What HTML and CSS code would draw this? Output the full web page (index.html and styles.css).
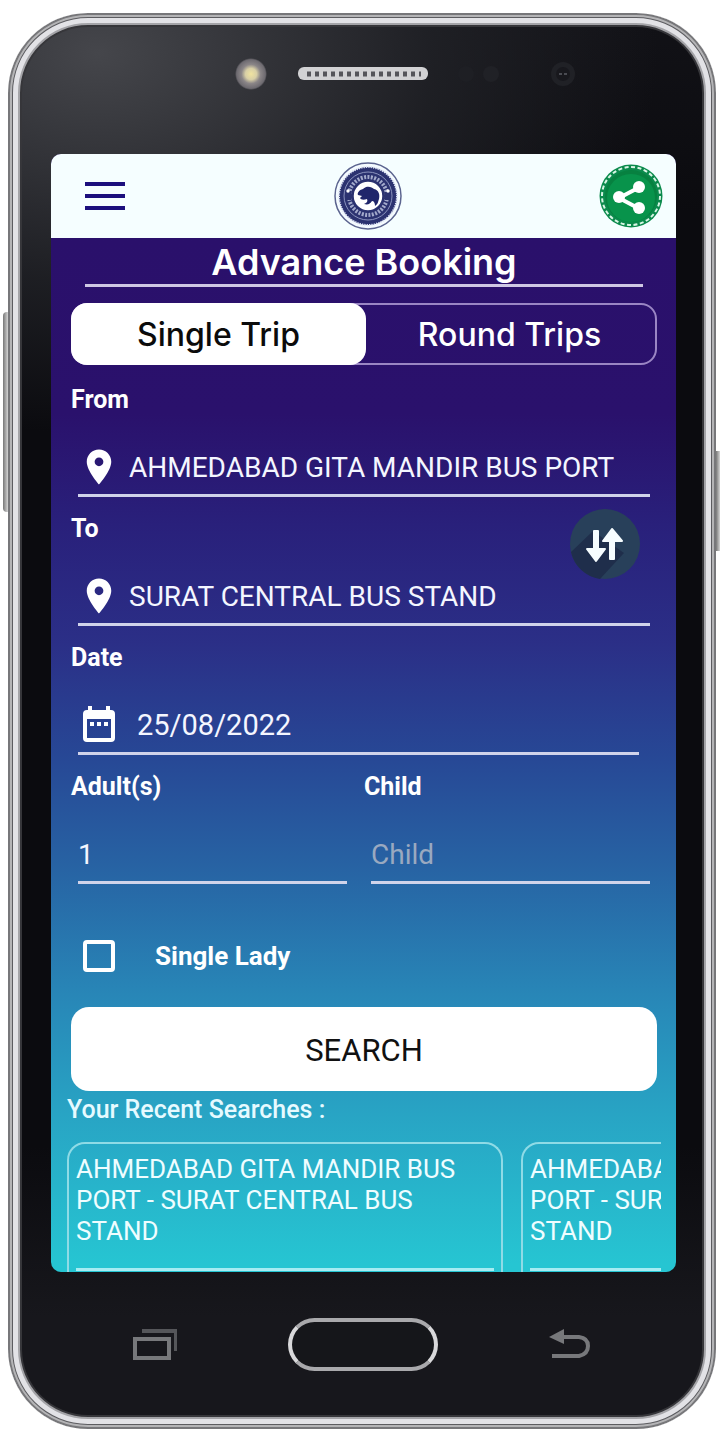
FILE: index.html
```html
<!DOCTYPE html>
<html lang="en">
<head>
    <meta charset="UTF-8">
    <meta name="viewport" content="width=device-width, initial-scale=1.0">
    <title>Advance Booking</title>
    <link rel="stylesheet" href="styles.css">
</head>
<body>
<div class="phone">
    <span class="side-key side-key-left"></span>
    <span class="side-key side-key-right"></span>

    <!-- Flash, speaker and sensors -->
    <div class="bezel-top">
        <svg width="360" height="40" viewBox="0 0 360 40">
            <defs>
                <radialGradient id="flash">
                    <stop offset="0" stop-color="#f0e3a0"/>
                    <stop offset="0.35" stop-color="#d8cfa6"/>
                    <stop offset="0.6" stop-color="#8b8688"/>
                    <stop offset="0.9" stop-color="#6d6a70"/>
                    <stop offset="1" stop-color="#6d6a70" stop-opacity="0"/>
                </radialGradient>
            </defs>
            <circle cx="20" cy="20" r="16" fill="url(#flash)"/>
            <rect x="67" y="13" width="130" height="13" rx="6" fill="#d2d2d4"/>
            <path d="M76 20H190" stroke="#55555a" stroke-width="5" stroke-dasharray="4 4"/>
            <circle cx="235" cy="20" r="8" fill="#1e1f24"/>
            <circle cx="260" cy="20" r="8" fill="#202126"/>
            <circle cx="332" cy="20" r="12" fill="#202126"/>
            <circle cx="332" cy="20" r="7" fill="#18181d"/>
            <path d="M328 20H331M333 20H336" stroke="#4a4b52" stroke-width="2"/>
        </svg>
    </div>

    <div class="screen">
        <header class="topbar">
            <button class="menu-btn" aria-label="Menu">
                <svg width="40" height="28" viewBox="0 0 40 28">
                    <path d="M0 2H40M0 14H40M0 26H40" stroke="#1c0f7d" stroke-width="4"/>
                </svg>
            </button>
            <svg class="logo" width="68" height="68" viewBox="0 0 68 68">
                <circle cx="34" cy="34" r="33" fill="#f4fbff" stroke="#5b648f" stroke-width="1.5"/>
                <circle cx="34" cy="34" r="29" fill="#2b3270"/>
                <circle cx="34" cy="34" r="29" fill="none" stroke="#dfe5f5" stroke-width="2" stroke-dasharray="1.2 1.2"/>
                <circle cx="34" cy="34" r="24" fill="none" stroke="#8a92bd" stroke-width="1"/>
                <circle cx="34" cy="34" r="19" fill="none" stroke="#a3aacb" stroke-width="4" stroke-dasharray="2 1.4"/>
                <path d="M14 30v8M54 30v8" stroke="#2b3270" stroke-width="6"/>
                <circle cx="14" cy="29" r="1.700" fill="#fff"/>
                <circle cx="54" cy="29" r="1.700" fill="#fff"/>
                <circle cx="34" cy="34" r="15" fill="#fff" stroke="#2b3270" stroke-width="1.5"/>
                <path d="M24 33C23 31 25 28 29 27C33 23 38 25 40 27C45 28 46 33 45 37C44 40 44 42 41 44C41 41 40 39 38 39C36 42 34 43 30 42C33 41 34 39 33 37C30 38 27 38 26 36L28 34z" fill="#20266b"/>
            </svg>
            <button class="share-btn" aria-label="Share">
                <svg width="64" height="64" viewBox="0 0 64 64">
                    <circle cx="32" cy="32" r="31.500" fill="#0b8a4c"/>
                    <circle cx="32" cy="32" r="29" fill="none" stroke="#d8f5e4" stroke-width="2" stroke-dasharray="4 2.500"/>
                    <circle cx="32" cy="32" r="26" fill="#078140"/>
                    <circle cx="32" cy="34" r="24" fill="#08934b"/>
                    <path d="M39 24L20 34L39 44" fill="none" stroke="#fff" stroke-width="4"/>
                    <circle cx="40" cy="23" r="6" fill="#fff"/>
                    <circle cx="20" cy="33" r="6" fill="#fff"/>
                    <circle cx="40" cy="44" r="6" fill="#fff"/>
                </svg>
            </button>
        </header>

        <main class="booking">
            <h1 class="title">Advance Booking</h1>

            <div class="tabs">
                <button class="tab active">Single Trip</button>
                <button class="tab">Round Trips</button>
            </div>

            <form class="search-form">
                <div class="field">
                    <label for="from">From</label>
                    <div class="input-row">
                        <svg class="field-icon" width="42" height="42" viewBox="0 0 24 24">
                            <path fill="#fff" d="M12 2C8.130 2 5 5.130 5 9c0 5.250 7 13 7 13s7-7.750 7-13c0-3.870-3.130-7-7-7zm0 9.500a2.500 2.500 0 0 1 0-5 2.500 2.500 0 0 1 0 5z"/>
                        </svg>
                        <input type="text" id="from" value="AHMEDABAD GITA MANDIR BUS PORT">
                    </div>
                </div>

                <div class="field">
                    <label for="to">To</label>
                    <div class="input-row">
                        <svg class="field-icon" width="42" height="42" viewBox="0 0 24 24">
                            <path fill="#fff" d="M12 2C8.130 2 5 5.130 5 9c0 5.250 7 13 7 13s7-7.750 7-13c0-3.870-3.130-7-7-7zm0 9.500a2.500 2.500 0 0 1 0-5 2.500 2.500 0 0 1 0 5z"/>
                        </svg>
                        <input type="text" id="to" value="SURAT CENTRAL BUS STAND">
                    </div>
                    <button type="button" class="swap-btn" aria-label="Swap">
                        <svg width="70" height="70" viewBox="0 0 70 70">
                            <circle cx="35" cy="35" r="35" fill="#28405a"/>
                            <path d="M23 22L1 43A35 35 0 0 0 30 70L54 44z" fill="#1f2e4b"/>
                            <g fill="#f6fdff" stroke="#f6fdff" stroke-width="2" stroke-linejoin="round">
                                <path d="M24 22h4v18h7l-9 12-9-12h7z"/>
                                <path d="M40 50h4V32h8l-10-12-9 12h7z"/>
                            </g>
                        </svg>
                    </button>
                </div>

                <div class="field">
                    <label for="date">Date</label>
                    <div class="input-row date-row">
                        <svg class="field-icon" width="42" height="42" viewBox="0 0 42 42">
                            <path fill="#fff" fill-rule="evenodd" d="M10 2h4v4h14V2h4v4h1q4 0 4 4v24q0 4-4 4H9q-4 0-4-4V10q0-4 4-4h1zM9 15v19h24V15z"/>
                            <path stroke="#fff" stroke-width="4" d="M12 20h4M19 20h4M26 20h4"/>
                        </svg>
                        <input type="text" id="date" value="25/08/2022">
                    </div>
                </div>

                <div class="field-pair">
                    <div class="field">
                        <label for="adults">Adult(s)</label>
                        <div class="input-row adult-row">
                            <input type="text" id="adults" value="1">
                        </div>
                    </div>
                    <div class="field">
                        <label for="child">Child</label>
                        <div class="input-row">
                            <input type="text" id="child" placeholder="Child">
                        </div>
                    </div>
                </div>

                <div class="check-row">
                    <input type="checkbox" id="lady">
                    <label for="lady">Single Lady</label>
                </div>

                <button type="submit" class="search-btn">SEARCH</button>
            </form>
        </main>

        <section class="recent">
            <h2>Your Recent Searches :</h2>
            <div class="recent-list">
                <a href="#" class="recent-card">AHMEDABAD GITA MANDIR BUS PORT - SURAT CENTRAL BUS STAND</a>
                <a href="#" class="recent-card">AHMEDABAD GITA MANDIR BUS PORT - SURAT CENTRAL BUS STAND</a>
            </div>
        </section>
    </div>

    <!-- Hardware keys -->
    <nav class="bezel-bottom">
        <button aria-label="Recent apps">
            <svg width="44" height="32" viewBox="0 0 44 32">
                <path d="M9 2H43V22" fill="none" stroke="#55565a" stroke-width="4"/>
                <rect x="2" y="10" width="34" height="19" fill="none" stroke="#77787b" stroke-width="4"/>
            </svg>
        </button>
        <button class="home-key" aria-label="Home"></button>
        <button aria-label="Back">
            <svg width="42" height="32" viewBox="0 0 42 32">
                <path d="M12 8H30Q39 9 39 17T30 27H3" fill="none" stroke="#77787b" stroke-width="4"/>
                <path d="M0 8L15 0V15z" fill="#77787b"/>
            </svg>
        </button>
    </nav>
</div>
</body>
</html>
```

FILE: styles.css
```css
* {
    box-sizing: border-box;
}

body {
    margin: 0;
    padding: 13px 4px 10px 8px;
    background-color: #fff;
    font-family: Roboto, "Liberation Sans", sans-serif;
    color: #fff;
}

button {
    border: none;
    background: none;
    padding: 0;
    font-family: inherit;
    cursor: pointer;
}

svg {
    display: block;
}

/* Phone body */
.phone {
    position: relative;
    padding: 0 40px 0 43px;
    border-radius: 80px;
    background-color: #0e0e13;
    background-image:
        radial-gradient(ellipse 560px 380px at 90px 40px, #45464b, rgba(34, 35, 40, 0.8) 60%, rgba(14, 14, 19, 0)),
        linear-gradient(#121217 0, #0b0b0f 200px, #0b0b0f 80%, #17171c 92%);
    box-shadow:
        inset 0 0 0 2px #77777a,
        inset 0 0 0 4px #b4b4b6,
        inset 0 0 0 5px #5c5c60,
        inset 0 0 0 10px #e2e2e6,
        inset 0 0 0 12px #a4a4a8,
        inset 0 0 0 14px #36363a;
}

.side-key {
    position: absolute;
    background: linear-gradient(90deg, #777, #d4d4d4);
}

.side-key-left {
    left: -5px;
    top: 299px;
    width: 5px;
    height: 200px;
    border-radius: 4px 0 0 4px;
}

.side-key-right {
    right: -4px;
    top: 438px;
    width: 4px;
    height: 100px;
}

.bezel-top {
    display: flex;
    justify-content: center;
    padding: 41px 0 60px 94px;
}

.bezel-bottom {
    display: flex;
    justify-content: space-between;
    align-items: center;
    padding: 46px 85px 58px 82px;
}

.home-key {
    width: 150px;
    height: 53px;
    border: 4px solid #a9a9ac;
    border-left-color: #d8d8da;
    border-right-color: #d8d8da;
    border-radius: 27px;
    background-color: #15161a;
}

/* App screen */
.screen {
    border-radius: 10px;
    overflow: hidden;
    background: linear-gradient(#2a106b 84px, #2a116c 260px, #29207b 370px, #2b2f87 490px, #274795 600px, #2762a3 710px, #2886b7 840px, #28a4c4 960px, #26c5d2 1110px);
}

.topbar {
    display: flex;
    justify-content: space-between;
    align-items: center;
    padding: 8px 13px 8px 34px;
    background-color: #f5feff;
}

.menu-btn {
    width: 52px;
}

.booking {
    padding: 0 19px 0 20px;
}

.title {
    margin: 0 14px;
    padding-top: 2px;
    border-bottom: 3px solid #cfc8e4;
    font-family: Inter, sans-serif;
    font-size: 36px;
    font-weight: 600;
    line-height: 44px;
    text-align: center;
}

.tabs {
    display: flex;
    margin: 16px 0 20px;
    border: 2px solid #9a86c4;
    border-radius: 16px;
}

.tab {
    flex: 1;
    margin: -2px;
    height: 62px;
    border-radius: 16px;
    font-family: Inter, sans-serif;
    font-size: 32px;
    font-weight: 500;
    color: #fff;
}

.tab.active {
    background-color: #fff;
    color: #0b0b0b;
}

.field {
    position: relative;
    margin-bottom: 17px;
}

.field label {
    display: block;
    margin-bottom: 25px;
    font-size: 25px;
    font-weight: 700;
    line-height: 30px;
}

.input-row {
    display: flex;
    align-items: center;
    margin: 0 7px;
    height: 57px;
    border-bottom: 3px solid #d0d3ea;
}

.field-icon {
    flex: none;
    margin-right: 9px;
}

.input-row input {
    flex: 1;
    min-width: 0;
    padding: 0;
    border: none;
    outline: none;
    background: none;
    font-family: inherit;
    font-size: 28px;
    color: #f4f6ff;
}

.input-row input::placeholder {
    color: #9aa9c0;
    opacity: 1;
}

.date-row {
    margin-right: 18px;
}

.date-row .field-icon {
    margin-right: 17px;
}

.date-row input {
    font-size: 29px;
}

.adult-row {
    margin-right: 17px;
}

.swap-btn {
    position: absolute;
    top: -5px;
    right: 17px;
}

.field-pair {
    display: flex;
}

.field-pair .field {
    flex: 1;
    min-width: 0;
}

.check-row {
    display: flex;
    align-items: center;
    gap: 40px;
    margin: 39px 12px 35px;
}

.check-row input {
    appearance: none;
    margin: 0;
    width: 32px;
    height: 32px;
    border: 4px solid #fff;
    border-radius: 4px;
}

.check-row label {
    font-size: 26px;
    font-weight: 700;
    line-height: 32px;
}

.search-btn {
    display: block;
    width: 100%;
    height: 84px;
    padding-top: 3px;
    border-radius: 18px;
    background-color: #fff;
    font-size: 31px;
    color: #111;
}

/* Recent searches */
.recent {
    padding: 3px 15px 0 16px;
}

.recent h2 {
    margin: 0 0 17px;
    font-size: 25px;
    font-weight: 500;
    line-height: 31px;
    color: #e6faff;
}

.recent-list {
    display: flex;
    gap: 18px;
    overflow-x: auto;
    scrollbar-width: none;
}

.recent-card {
    flex: none;
    width: 436px;
    padding: 10px 7px 1px;
    border: 2px solid #8fdbe6;
    border-bottom: none;
    border-radius: 18px 18px 0 0;
    font-size: 26px;
    line-height: 31px;
    text-decoration: none;
    color: #effdff;
}

.recent-card::after {
    content: "";
    display: block;
    margin-top: 21px;
    height: 3px;
    background-color: #a6ecf2;
}
```
